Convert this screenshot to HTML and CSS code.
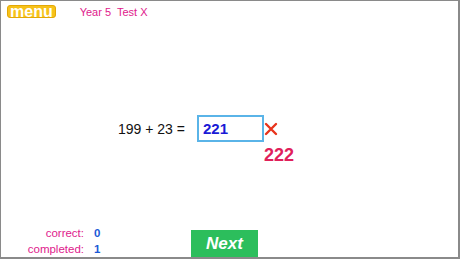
FILE: index.html
```html
<!DOCTYPE html>
<html lang="en">
<head>
    <meta charset="UTF-8">
    <meta name="viewport" content="width=device-width, initial-scale=1.0">
    <title>Year 5 Test X</title>
    <link rel="stylesheet" href="styles.css">
</head>
<body>
    <div class="screen">
        <header class="top-bar">
            <a href="#" class="menu-btn">menu</a>
            <span class="test-title">Year 5&nbsp; Test X</span>
        </header>

        <main class="problem">
            <div class="question">
                <span class="sum">199 + 23 =</span>
                <div class="answer-box">221</div>
                <svg class="wrong-mark" width="14" height="14" viewBox="0 0 14 14">
                    <path d="M2 2 L12 12 M12 2 L2 12" stroke="#e8341c" stroke-width="2.4" stroke-linecap="round" fill="none"/>
                </svg>
            </div>
            <div class="correction">222</div>
        </main>

        <footer class="bottom-bar">
            <div class="score">
                <span class="score-label">correct:</span>
                <span class="score-value">0</span>
                <span class="score-label">completed:</span>
                <span class="score-value">1</span>
            </div>
            <button class="next-btn">Next</button>
        </footer>
    </div>
</body>
</html>
```

FILE: styles.css
```css
body {
    margin: 0;
    font-family: "Liberation Sans", Arial, sans-serif;
    background-color: #fff;
}
.screen {
    width: 460px;
    height: 259px;
    box-sizing: border-box;
    border-style: solid;
    border-color: #8a8a8a;
    border-width: 1px 2px 2px 1px;
    display: flex;
    flex-direction: column;
    overflow: hidden;
}
.top-bar {
    display: flex;
    align-items: center;
    gap: 24px;
    padding: 4px 0 0 6px;
}
.menu-btn {
    display: inline-block;
    background-color: #f7c21a;
    border: 1px solid #e3a806;
    border-radius: 3px;
    color: #fff;
    font-size: 16px;
    font-weight: bold;
    line-height: 11px;
    height: 11px;
    padding: 0 2px;
    text-decoration: none;
}
.test-title {
    color: #e0208c;
    font-size: 11px;
}
.problem {
    flex: 1;
    padding: 97px 0 0 117px;
}
.question {
    display: flex;
    align-items: center;
}
.sum {
    font-size: 14px;
    color: #111;
    margin-right: 12px;
}
.answer-box {
    width: 59px;
    height: 23px;
    border: 2px solid #5ab4e8;
    color: #1a1ad6;
    font-size: 15px;
    font-weight: bold;
    line-height: 23px;
    padding-left: 4px;
}
.correction {
    margin: 3px 0 0 146px;
    color: #e0205a;
    font-size: 18px;
    font-weight: bold;
}
.bottom-bar {
    display: flex;
    align-items: flex-end;
}
.score {
    display: grid;
    grid-template-columns: 83px auto;
    column-gap: 10px;
    width: 190px;
    font-size: 11.5px;
    line-height: 16px;
}
.score-label {
    color: #e0208c;
    text-align: right;
}
.score-value {
    color: #1a5ad6;
    font-weight: bold;
}
.next-btn {
    width: 67px;
    height: 27px;
    background-color: #2cbe5c;
    border: none;
    color: #fff;
    font-family: "Liberation Sans", Arial, sans-serif;
    font-size: 17px;
    font-weight: bold;
    font-style: italic;
    padding: 0;
}
```
